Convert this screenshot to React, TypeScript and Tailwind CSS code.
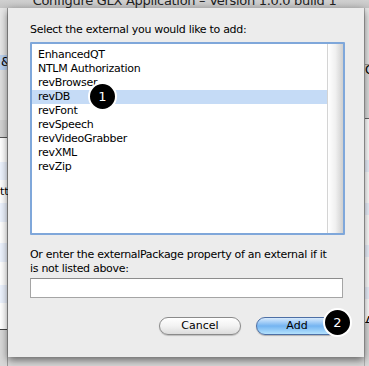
import React from "react";

const items = [
  "EnhancedQT",
  "NTLM Authorization",
  "revBrowser",
  "revDB",
  "revFont",
  "revSpeech",
  "revVideoGrabber",
  "revXML",
  "revZip",
];

function Badge({ n }: { n: number }) {
  return (
    <div className="flex h-[29px] w-[29px] items-center justify-center rounded-full border-2 border-white bg-black text-[13px] leading-none text-white">
      {n}
    </div>
  );
}

function LeftStrip() {
  return (
    <div className="flex w-[8px] flex-col border-r border-[#9a9a9a]">
      <div className="h-[47px] bg-[#e6e6e6]" />
      <div className="h-[15px] overflow-hidden bg-[#b9d1f1] pl-[1px] text-[12px] leading-[15px]">&amp;</div>
      <div className="h-[50px] bg-[#dedede]" />
      <div className="h-[18px] border-b border-[#555] bg-[#d2d2d2]" />
      <div className="h-[24px] bg-white" />
      <div className="h-[18px] bg-[#edf3fe]" />
      <div className="h-[23px] bg-white text-[11px] leading-[23px]">tt</div>
      <div className="h-[19px] bg-[#edf3fe]" />
      <div className="h-[21px] bg-white" />
      <div className="h-[19px] bg-[#edf3fe]" />
      <div className="h-[23px] bg-white" />
      <div className="h-[18px] bg-[#edf3fe]" />
      <div className="h-[27px] border-b border-[#444] bg-white" />
      <div className="flex-1 bg-[#d8d8d8]" />
    </div>
  );
}

function RightStrip() {
  return (
    <div className="flex flex-1 flex-col border-l border-[#b0b0b0]">
      <div className="h-[57px] border-b border-[#9c9c9c] bg-[#e6e6e6]" />
      <div className="h-[54px] border-b border-[#666] bg-[#dedede] text-[12px] leading-[10px]">C</div>
      <div className="h-[41px] bg-white" />
      <div className="h-[12px] bg-[#edf3fe]" />
      <div className="h-[31px] bg-white" />
      <div className="h-[12px] bg-[#edf3fe]" />
      <div className="h-[30px] bg-white" />
      <div className="h-[12px] bg-[#edf3fe]" />
      <div className="h-[30px] bg-white" />
      <div className="h-[12px] bg-[#edf3fe]" />
      <div className="h-[24px] border-b border-[#444] bg-white text-[12px] leading-[44px]">A</div>
      <div className="flex-1 bg-[#d8d8d8]" />
    </div>
  );
}

export default function App() {
  return (
    <div className="flex h-[366px] w-[369px] flex-col overflow-hidden bg-[#d8d8d8] font-['DejaVu_Sans',sans-serif] text-black">
      <div className="flex h-[8px] items-end justify-center overflow-hidden bg-gradient-to-b from-[#d0d0d0] to-[#c4c4c4]">
        <span className="text-[13px] leading-[14px] tracking-[-0.3px] text-[#222]">
          Configure GLX Application – Version 1.0.0 build 1
        </span>
      </div>
      <div className="flex flex-1">
        <LeftStrip />
        <div className="relative flex h-[349px] w-[356px] shrink-0 flex-col bg-[#ececec] px-[22px] shadow-[0_3px_8px_rgba(0,0,0,0.55)]">
          <p className="mt-[15px] text-[11px] leading-[14px] tracking-[-0.3px]">Select the external you would like to add:</p>
          <div className="mt-[5px] flex h-[193px] w-[315px] rounded-[1px] border-2 border-[#7fa7da] bg-white">
            <ul className="flex-1 pt-[4px]">
              {items.map((it) => (
                <li
                  key={it}
                  className={`h-[14px] pl-[6px] text-[11px] leading-[14px] tracking-[-0.3px] ${it === "revDB" ? "bg-[#c5dbf6]" : ""}`}
                >
                  {it}
                </li>
              ))}
            </ul>
            <div className="w-[16px] border-l border-[#d4d4d4] bg-gradient-to-r from-[#ffffff] via-[#f0f0f0] to-[#cfcfcf]" />
          </div>
          <p className="mt-[13px] w-[306px] text-[11px] leading-[14px] tracking-[-0.3px]">
            Or enter the externalPackage property of an external if it is not listed above:
          </p>
          <input
            className="mt-[2px] h-[20px] w-[313px] border border-[#a5a5a5] border-t-[#8c8c8c] bg-white px-1 text-[11px] outline-none"
            readOnly
          />
          <div className="mt-[19px] flex justify-end gap-[15px] pr-[4px]">
            <button className="h-[18px] w-[82px] rounded-full border border-[#8a8a8a] bg-gradient-to-b from-[#ffffff] via-[#f2f2f2] to-[#dcdcdc] text-[11px] leading-[16px] shadow-[0_1px_1px_rgba(0,0,0,0.2)]">
              Cancel
            </button>
            <button className="h-[18px] w-[82px] rounded-full border border-[#4d6fa5] bg-gradient-to-b from-[#d8eafc] via-[#74b4f1] to-[#b4e2fd] text-[11px] leading-[16px] shadow-[0_1px_1px_rgba(0,0,0,0.25)]">
              Add
            </button>
          </div>
          <div className="absolute left-[80px] top-[74px]">
            <Badge n={1} />
          </div>
          <div className="absolute left-[315px] top-[300px]">
            <Badge n={2} />
          </div>
        </div>
        <RightStrip />
      </div>
    </div>
  );
}
